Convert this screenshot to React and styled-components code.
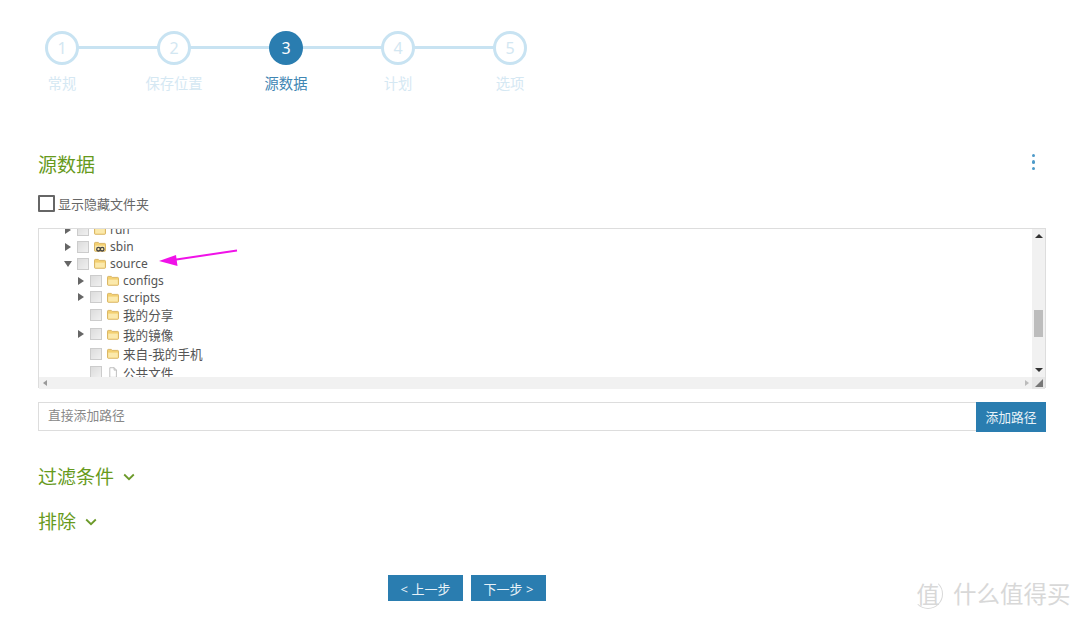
import styled, { createGlobalStyle } from 'styled-components';

const GlobalStyle = createGlobalStyle`
  html, body {
    margin: 0;
    padding: 0;
    background: #fff;
  }
  body {
    font-family: 'Noto Sans', 'Noto Sans CJK SC', sans-serif;
    color: #555;
  }
`;

const steps = [
  { num: 1, label: '常规' },
  { num: 2, label: '保存位置' },
  { num: 3, label: '源数据', active: true },
  { num: 4, label: '计划' },
  { num: 5, label: '选项' },
];

const rows = [
  { name: 'run', level: 0, arrow: 'right', icon: 'folder', h: 17 },
  { name: 'sbin', level: 0, arrow: 'right', icon: 'link', h: 17 },
  { name: 'source', level: 0, arrow: 'down', icon: 'folder', h: 17 },
  { name: 'configs', level: 1, arrow: 'right', icon: 'folder', h: 17 },
  { name: 'scripts', level: 1, arrow: 'right', icon: 'folder', h: 16 },
  { name: '我的分享', level: 1, icon: 'folder', h: 19, cjk: true },
  { name: '我的镜像', level: 1, arrow: 'right', icon: 'folder', h: 20, cjk: true },
  { name: '来自-我的手机', level: 1, icon: 'folder', h: 19, cjk: true },
  { name: '公共文件', level: 1, icon: 'file', h: 18, cjk: true },
];

const Folder = ({ link }) => (
  <IconSvg viewBox="0 0 12 11">
    <path d="M.5 2.200c0-.5.3-.8.8-.8h3l.9 1h5.500c.5 0 .8.300.8.800v6.300c0 .5-.3.800-.8.800H1.300c-.5 0-.8-.3-.8-.8z" fill="#f3d071" stroke="#d3ab52" strokeWidth=".8" />
    <path d="M1.200 4.600h9.600v5H1.200z" fill="#fbe9ac" />
    {link && (
      <g fill="none" stroke="#444" strokeWidth="1.300">
        <circle cx="4.500" cy="8.200" r="1.800" />
        <circle cx="8.200" cy="8.200" r="1.800" />
      </g>
    )}
  </IconSvg>
);

const FileIcon = () => (
  <IconSvg viewBox="0 0 12 12">
    <path d="M2.500.8h4.800l2.400 2.500v8H2.500z" fill="#fff" stroke="#aaa" strokeWidth=".8" />
    <path d="M7.200.8v2.600h2.500" fill="none" stroke="#aaa" strokeWidth=".8" />
  </IconSvg>
);

const Chevron = () => (
  <ChevronSvg viewBox="0 0 12 8">
    <path d="M1.200 1.500 6 6.200l4.800-4.700" fill="none" stroke="#6c9a2a" strokeWidth="1.800" />
  </ChevronSvg>
);

const App = () => {
  return (
    <Page>
      <GlobalStyle />
      <Stepper>
        {steps.map((s, i) => (
          <Step key={s.num} $first={i === 0} $last={i === steps.length - 1}>
            <Circle $active={s.active}>{s.num}</Circle>
            <StepLabel $active={s.active}>{s.label}</StepLabel>
          </Step>
        ))}
      </Stepper>

      <SectionHead>
        <Title>源数据</Title>
        <Kebab>
          <span />
          <span />
          <span />
        </Kebab>
      </SectionHead>

      <CheckRow>
        <BigCheck />
        <span>显示隐藏文件夹</span>
      </CheckRow>

      <TreeBox>
        <TreeView>
          <TreeScroll>
            {rows.map((r) => (
              <TreeRow key={r.name} $level={r.level} $h={r.h} $cjk={r.cjk}>
                <Arrow $dir={r.arrow} />
                <TreeCheck />
                {r.icon === 'file' ? <FileIcon /> : <Folder link={r.icon === 'link'} />}
                <span>{r.name}</span>
              </TreeRow>
            ))}
          </TreeScroll>
        </TreeView>
        <VBar>
          <BarArrow $dir="up" />
          <Thumb />
          <BarArrow $dir="down" />
        </VBar>
        <HBar>
          <SmallArrow $dir="left" />
          <SmallArrow $dir="right" />
        </HBar>
        <Corner>
          <svg width="8" height="8" viewBox="0 0 8 8">
            <path d="M8 0v8H0z" fill="#777" />
          </svg>
        </Corner>
        <PinkArrow viewBox="0 0 80 18">
          <path d="M78 1.500 14 11" stroke="#f012e8" strokeWidth="2" fill="none" />
          <path d="M0 12 17 6l1.500 11z" fill="#f012e8" />
        </PinkArrow>
      </TreeBox>

      <PathRow>
        <PathInput placeholder="直接添加路径" />
        <AddButton>添加路径</AddButton>
      </PathRow>

      <Collapse>
        过滤条件
        <Chevron />
      </Collapse>
      <Collapse $second>
        排除
        <Chevron />
      </Collapse>

      <Footer>
        <NavButton>&lt; 上一步</NavButton>
        <NavButton>下一步 &gt;</NavButton>
      </Footer>

      <Watermark>
        <Badge>
          <span>值</span>
        </Badge>
        什么值得买
      </Watermark>
    </Page>
  );
};

const Page = styled.div`
  position: relative;
  width: 1080px;
  height: 620px;
  padding: 31px 34px 0 38px;
  box-sizing: border-box;
  overflow: hidden;
`;

const Stepper = styled.div`
  display: flex;
  margin-left: -32px;
`;

const Step = styled.div`
  position: relative;
  width: 112px;
  display: flex;
  flex-direction: column;
  align-items: center;
  &::before {
    content: '';
    position: absolute;
    top: 15px;
    left: ${(p) => (p.$first ? '50%' : '0')};
    right: ${(p) => (p.$last ? '50%' : '0')};
    height: 3px;
    background: #c8e3f2;
  }
`;

const Circle = styled.div`
  position: relative;
  width: 34px;
  height: 34px;
  box-sizing: border-box;
  border-radius: 50%;
  display: flex;
  align-items: center;
  justify-content: center;
  font-size: 16px;
  color: ${(p) => (p.$active ? '#fff' : '#d3e7f2')};
  background: ${(p) => (p.$active ? '#2a7db0' : '#fff')};
  border: ${(p) => (p.$active ? 'none' : '3px solid #c8e3f2')};
`;

const StepLabel = styled.div`
  margin-top: 9px;
  font-size: 14.300px;
  line-height: 20px;
  color: ${(p) => (p.$active ? '#3f86b3' : '#d5e8f3')};
`;

const SectionHead = styled.div`
  display: flex;
  justify-content: space-between;
  align-items: center;
  margin-top: 56px;
  height: 28px;
`;

const Title = styled.h2`
  margin: 0;
  font-size: 19px;
  font-weight: 400;
  color: #679a1c;
`;

const Kebab = styled.div`
  display: flex;
  flex-direction: column;
  gap: 3px;
  margin-right: 11px;
  margin-top: -4px;
  span {
    width: 3.500px;
    height: 3.500px;
    border-radius: 50%;
    background: #4d9ac9;
  }
`;

const CheckRow = styled.div`
  display: flex;
  align-items: center;
  gap: 3px;
  margin-top: 16px;
  height: 18px;
  font-size: 13px;
  color: #666;
  span {
    padding-top: 1px;
  }
`;

const BigCheck = styled.div`
  width: 17px;
  height: 17px;
  box-sizing: border-box;
  border: 2px solid #666;
  border-radius: 1px;
`;

const TreeBox = styled.div`
  position: relative;
  display: grid;
  grid-template-columns: 1fr 13px;
  grid-template-rows: 1fr 12px;
  margin-top: 16px;
  width: 1008px;
  height: 160px;
  box-sizing: border-box;
  border: 1px solid #ddd;
`;

const TreeView = styled.div`
  overflow: hidden;
`;

const TreeScroll = styled.div`
  margin-top: -8px;
  padding-left: 25px;
`;

const TreeRow = styled.div`
  display: flex;
  align-items: center;
  height: ${(p) => p.$h}px;
  padding-left: ${(p) => p.$level * 13}px;
  font-size: ${(p) => (p.$cjk ? '12.600px' : '12px')};
  color: #555;
  white-space: nowrap;
  span {
    margin-left: 4px;
  }
`;

const Arrow = styled.i`
  width: 0;
  height: 0;
  box-sizing: content-box;
  ${(p) =>
    p.$dir === 'right'
      ? 'border-left: 6px solid #666; border-top: 4px solid transparent; border-bottom: 4px solid transparent; margin-right: 6px; margin-left: 1px;'
      : p.$dir === 'down'
        ? 'border-top: 6px solid #666; border-left: 4px solid transparent; border-right: 4px solid transparent; margin-right: 5px;'
        : 'margin-left: 13px;'}
`;

const TreeCheck = styled.div`
  flex: none;
  width: 12px;
  height: 12px;
  box-sizing: border-box;
  margin-right: 5px;
  border: 1px solid #ccc;
  background: linear-gradient(135deg, #dcdcdc, #f0f0f0);
`;

const IconSvg = styled.svg`
  flex: none;
  width: 12px;
  height: 11px;
`;

const VBar = styled.div`
  grid-row: 1;
  grid-column: 2;
  display: flex;
  flex-direction: column;
  align-items: center;
  padding: 5px 0;
  box-sizing: border-box;
  background: #f1f1f1;
`;

const BarArrow = styled.i`
  width: 0;
  height: 0;
  border-left: 4px solid transparent;
  border-right: 4px solid transparent;
  ${(p) => (p.$dir === 'up' ? 'border-bottom: 4px solid #333;' : 'border-top: 4px solid #333; margin-top: 31px;')}
`;

const Thumb = styled.div`
  width: 9px;
  height: 27px;
  margin-top: 72px;
  background: #bdbdbd;
`;

const HBar = styled.div`
  grid-row: 2;
  grid-column: 1;
  display: flex;
  justify-content: space-between;
  align-items: center;
  padding: 0 3px 0 4px;
  background: #f1f1f1;
`;

const SmallArrow = styled.i`
  width: 0;
  height: 0;
  border-top: 3px solid transparent;
  border-bottom: 3px solid transparent;
  ${(p) => (p.$dir === 'left' ? 'border-right: 4px solid #999;' : 'border-left: 4px solid #bbb;')}
`;

const Corner = styled.div`
  grid-row: 2;
  grid-column: 2;
  display: flex;
  align-items: center;
  justify-content: center;
  background: #e6e6e6;
`;

const PinkArrow = styled.svg`
  position: absolute;
  left: 120px;
  top: 20px;
  width: 80px;
  height: 18px;
`;

const PathRow = styled.div`
  display: flex;
  width: 1008px;
  height: 30px;
  margin-top: 14px;
`;

const PathInput = styled.input`
  flex: 1;
  min-width: 0;
  height: 29px;
  box-sizing: border-box;
  border: 1px solid #ddd;
  border-right: none;
  padding: 0 9px 3px;
  font-family: inherit;
  font-size: 12.800px;
  outline: none;
  &::placeholder {
    color: #888;
    opacity: 1;
  }
`;

const AddButton = styled.button`
  width: 70px;
  border: none;
  padding: 0 0 2px;
  background: #2a7db0;
  color: #e8f2f8;
  font-family: inherit;
  font-size: 12.800px;
`;

const Collapse = styled.div`
  display: flex;
  align-items: center;
  gap: 9px;
  height: 26px;
  margin-top: ${(p) => (p.$second ? '19px' : '31px')};
  font-size: 19px;
  color: #679a1c;
`;

const ChevronSvg = styled.svg`
  width: 12px;
  height: 8px;
  margin-top: 2px;
`;

const Footer = styled.div`
  display: flex;
  gap: 8px;
  margin-top: 41px;
  margin-left: 350px;
`;

const NavButton = styled.button`
  width: 75px;
  height: 26px;
  border: none;
  padding: 0;
  background: #2a7db0;
  color: #e8f2f8;
  font-family: inherit;
  font-size: 13px;
`;

const Watermark = styled.div`
  position: absolute;
  left: 913px;
  top: 579px;
  display: flex;
  align-items: center;
  gap: 10px;
  font-size: 23.500px;
  line-height: 30px;
  color: #d8d8d8;
  white-space: nowrap;
`;

const Badge = styled.div`
  width: 30px;
  height: 30px;
  box-sizing: border-box;
  border: 1.500px solid #d8d8d8;
  border-left-color: transparent;
  border-top-color: transparent;
  border-radius: 50%;
  display: flex;
  align-items: center;
  justify-content: center;
  font-size: 23px;
`;

export default App;
